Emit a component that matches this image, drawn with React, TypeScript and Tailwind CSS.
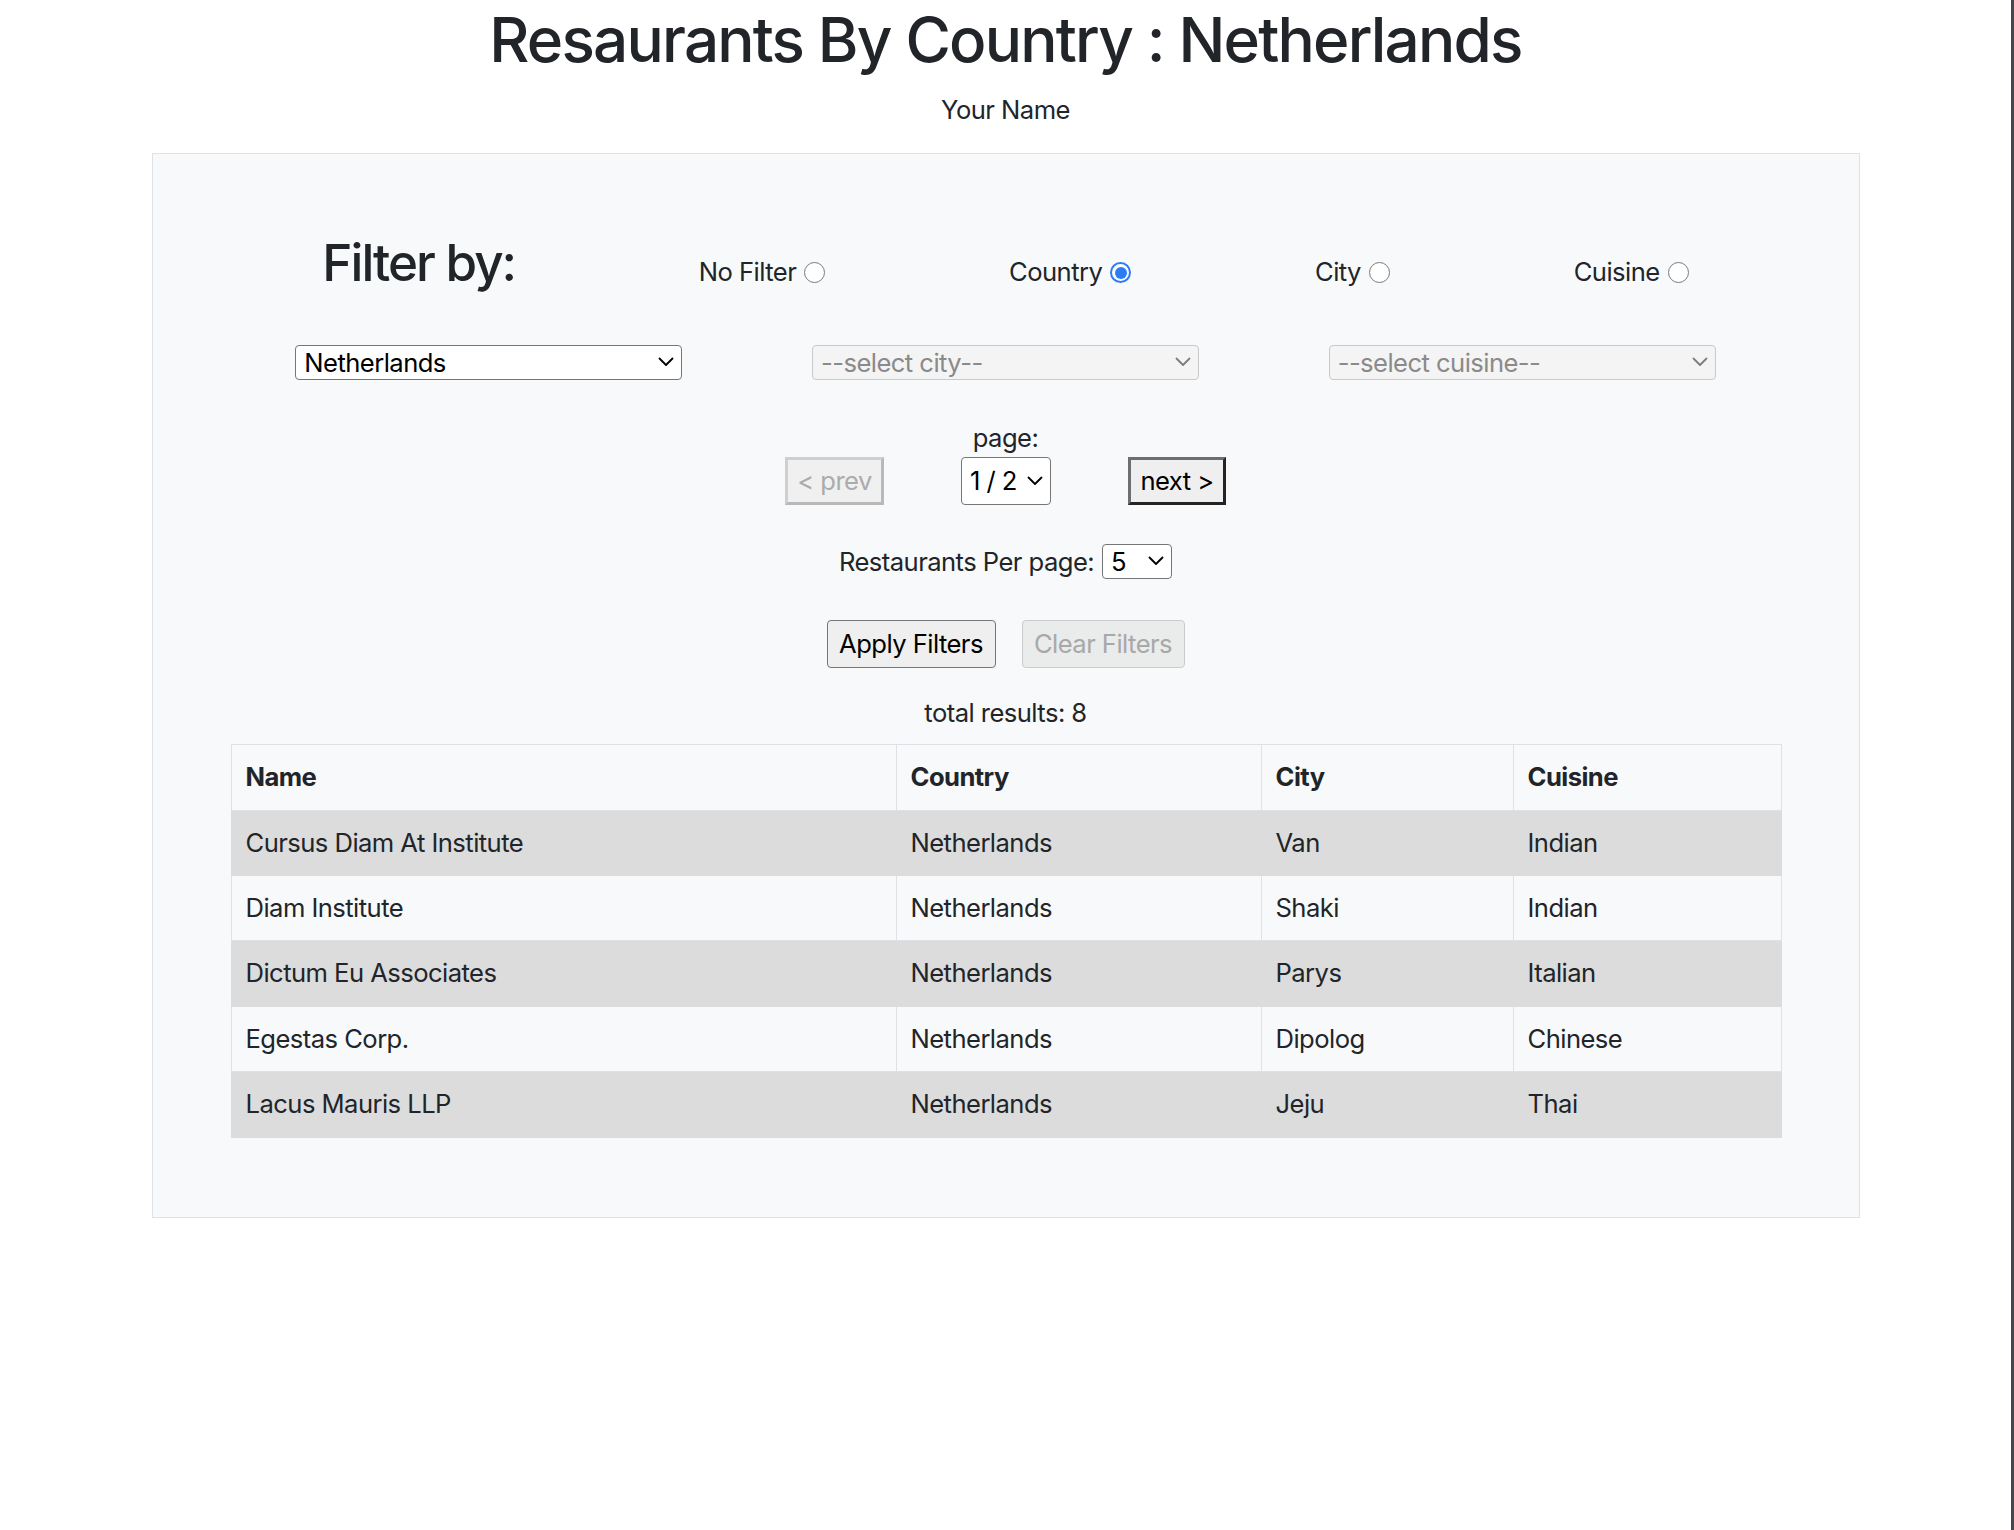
import React from "react";

const restaurants = [
  { name: "Cursus Diam At Institute", country: "Netherlands", city: "Van", cuisine: "Indian" },
  { name: "Diam Institute", country: "Netherlands", city: "Shaki", cuisine: "Indian" },
  { name: "Dictum Eu Associates", country: "Netherlands", city: "Parys", cuisine: "Italian" },
  { name: "Egestas Corp.", country: "Netherlands", city: "Dipolog", cuisine: "Chinese" },
  { name: "Lacus Mauris LLP", country: "Netherlands", city: "Jeju", cuisine: "Thai" },
];

function Chevron({ className }: { className?: string }) {
  return (
    <svg width="16" height="10" viewBox="0 0 16 10" fill="none" className={className}>
      <path d="M1.5 1.5L8 8l6.5-6.5" stroke="currentColor" strokeWidth="1.8" strokeLinecap="round" strokeLinejoin="round" />
    </svg>
  );
}

function Radio({ checked }: { checked?: boolean }) {
  if (checked) {
    return (
      <span className="inline-flex items-center justify-center w-[21px] h-[21px] rounded-full border-[2px] border-[#2c7cf6] bg-white">
        <span className="w-[12px] h-[12px] rounded-full bg-[#2c7cf6]" />
      </span>
    );
  }
  return <span className="inline-block w-[21px] h-[21px] rounded-full border-[1.5px] border-[#7a7a7a] bg-white" />;
}

function FilterOption({ label, checked }: { label: string; checked?: boolean }) {
  return (
    <label className="inline-flex items-center gap-[8px] text-[25.6px] leading-[38.4px]">
      <span>{label}</span>
      <Radio checked={checked} />
    </label>
  );
}

function FakeSelect({ value, disabled }: { value: string; disabled?: boolean }) {
  return (
    <div
      className={
        disabled
          ? "w-[387px] h-[35px] flex items-center justify-between pl-[8px] pr-[7px] rounded-[4px] border border-[#c9c9c9] bg-[#f4f4f5] text-[#8a8a8a]"
          : "w-[387px] h-[35px] flex items-center justify-between pl-[8px] pr-[7px] rounded-[4px] border border-[#767676] bg-white text-black"
      }
    >
      <span className="text-[25.6px] leading-none">{value}</span>
      <Chevron className={disabled ? "text-[#7d7d7d]" : "text-black"} />
    </div>
  );
}

export default function App() {
  return (
    <div className="h-[1530px] bg-white border-r-[3px] border-[#46464a] text-[#212529] tracking-[-0.55px] font-['Inter','Liberation_Sans',sans-serif]">
      <h1 className="pt-[3px] text-center text-[62px] leading-[74px] font-medium tracking-[-1.8px]">
        Resaurants By Country : Netherlands
      </h1>
      <p className="mt-[14px] text-center text-[25.6px] leading-[38.4px]">Your Name</p>

      <div className="mt-[24px] mx-auto w-[1708px] border border-[#dfe2e6] bg-[#f8f9fa] px-[78px] pt-[78px] pb-[79px]">
        {/* filter options */}
        <div className="flex items-baseline justify-around">
          <h2 className="text-[51.2px] leading-[1.2] font-medium tracking-[-2px]">Filter by:</h2>
          <FilterOption label="No Filter" />
          <FilterOption label="Country" checked />
          <FilterOption label="City" />
          <FilterOption label="Cuisine" />
        </div>

        <div className="mt-[51px] grid grid-cols-3">
          <div className="flex justify-center">
            <FakeSelect value="Netherlands" />
          </div>
          <div className="flex justify-center">
            <FakeSelect value="--select city--" disabled />
          </div>
          <div className="flex justify-center">
            <FakeSelect value="--select cuisine--" disabled />
          </div>
        </div>

        {/* paging */}
        <p className="mt-[39px] text-center text-[25.6px] leading-[38px]">page:</p>
        <div className="flex justify-center gap-[77px] h-[48px]">
          <button className="w-[99px] h-[48px] border-[3px] border-t-[#cfcfcf] border-l-[#cfcfcf] border-r-[#b9b9b9] border-b-[#b9b9b9] bg-[#f0f0f0] text-[25.6px] text-[#ababab]">
            &lt; prev
          </button>
          <div className="w-[90px] h-[48px] flex items-center justify-between pl-[8px] pr-[7px] rounded-[4px] border border-[#767676] bg-white text-black">
            <span className="text-[25.6px] leading-none">1 / 2</span>
            <Chevron />
          </div>
          <button className="w-[98px] h-[48px] border-[3px] border-t-[#6e6e6e] border-l-[#6e6e6e] border-r-[#242424] border-b-[#242424] bg-[#efefef] text-[25.6px] text-black">
            next &gt;
          </button>
        </div>

        <div className="mt-[39px] flex justify-center items-center gap-[8px] h-[35px]">
          <span className="text-[25.6px] leading-[35px]">Restaurants Per page:</span>
          <div className="w-[70px] h-[35px] flex items-center justify-between pl-[8px] pr-[7px] rounded-[4px] border border-[#767676] bg-white text-black">
            <span className="text-[25.6px] leading-none">5</span>
            <Chevron />
          </div>
        </div>

        {/* actions */}
        <div className="mt-[41px] flex justify-center gap-[26px]">
          <button className="w-[169px] h-[48px] rounded-[4px] border border-[#767676] bg-[#efefef] text-[25.6px] text-black">
            Apply Filters
          </button>
          <button className="w-[163px] h-[48px] rounded-[4px] border border-[#cbcbcb] bg-[#eaebeb] text-[25.6px] text-[#a8a8a8]">
            Clear Filters
          </button>
        </div>

        <p className="mt-[26px] text-center text-[25.6px] leading-[38.4px]">total results: 8</p>

        <table className="mt-[12px] w-full table-fixed border-collapse text-[25.6px] leading-[38.4px]">
          <colgroup>
            <col className="w-[665px]" />
            <col className="w-[365px]" />
            <col className="w-[252px]" />
            <col className="w-[268px]" />
          </colgroup>
          <thead>
            <tr className="bg-[#f8f9fa]">
              <th className="border border-[#dee2e6] px-[14px] py-[13px] text-left font-bold">Name</th>
              <th className="border border-[#dee2e6] px-[14px] py-[13px] text-left font-bold">Country</th>
              <th className="border border-[#dee2e6] px-[14px] py-[13px] text-left font-bold">City</th>
              <th className="border border-[#dee2e6] px-[14px] py-[13px] text-left font-bold">Cuisine</th>
            </tr>
          </thead>
          <tbody>
            {restaurants.map((r, i) => (
              <tr key={r.name} className={i % 2 === 0 ? "bg-[#dcdcdc]" : "bg-[#f8f9fa]"}>
                <td className={i % 2 === 0 ? "border border-[#dcdcdc] px-[14px] py-[13px]" : "border border-[#dee2e6] px-[14px] py-[13px]"}>{r.name}</td>
                <td className={i % 2 === 0 ? "border border-[#dcdcdc] px-[14px] py-[13px]" : "border border-[#dee2e6] px-[14px] py-[13px]"}>{r.country}</td>
                <td className={i % 2 === 0 ? "border border-[#dcdcdc] px-[14px] py-[13px]" : "border border-[#dee2e6] px-[14px] py-[13px]"}>{r.city}</td>
                <td className={i % 2 === 0 ? "border border-[#dcdcdc] px-[14px] py-[13px]" : "border border-[#dee2e6] px-[14px] py-[13px]"}>{r.cuisine}</td>
              </tr>
            ))}
          </tbody>
        </table>
      </div>
    </div>
  );
}
